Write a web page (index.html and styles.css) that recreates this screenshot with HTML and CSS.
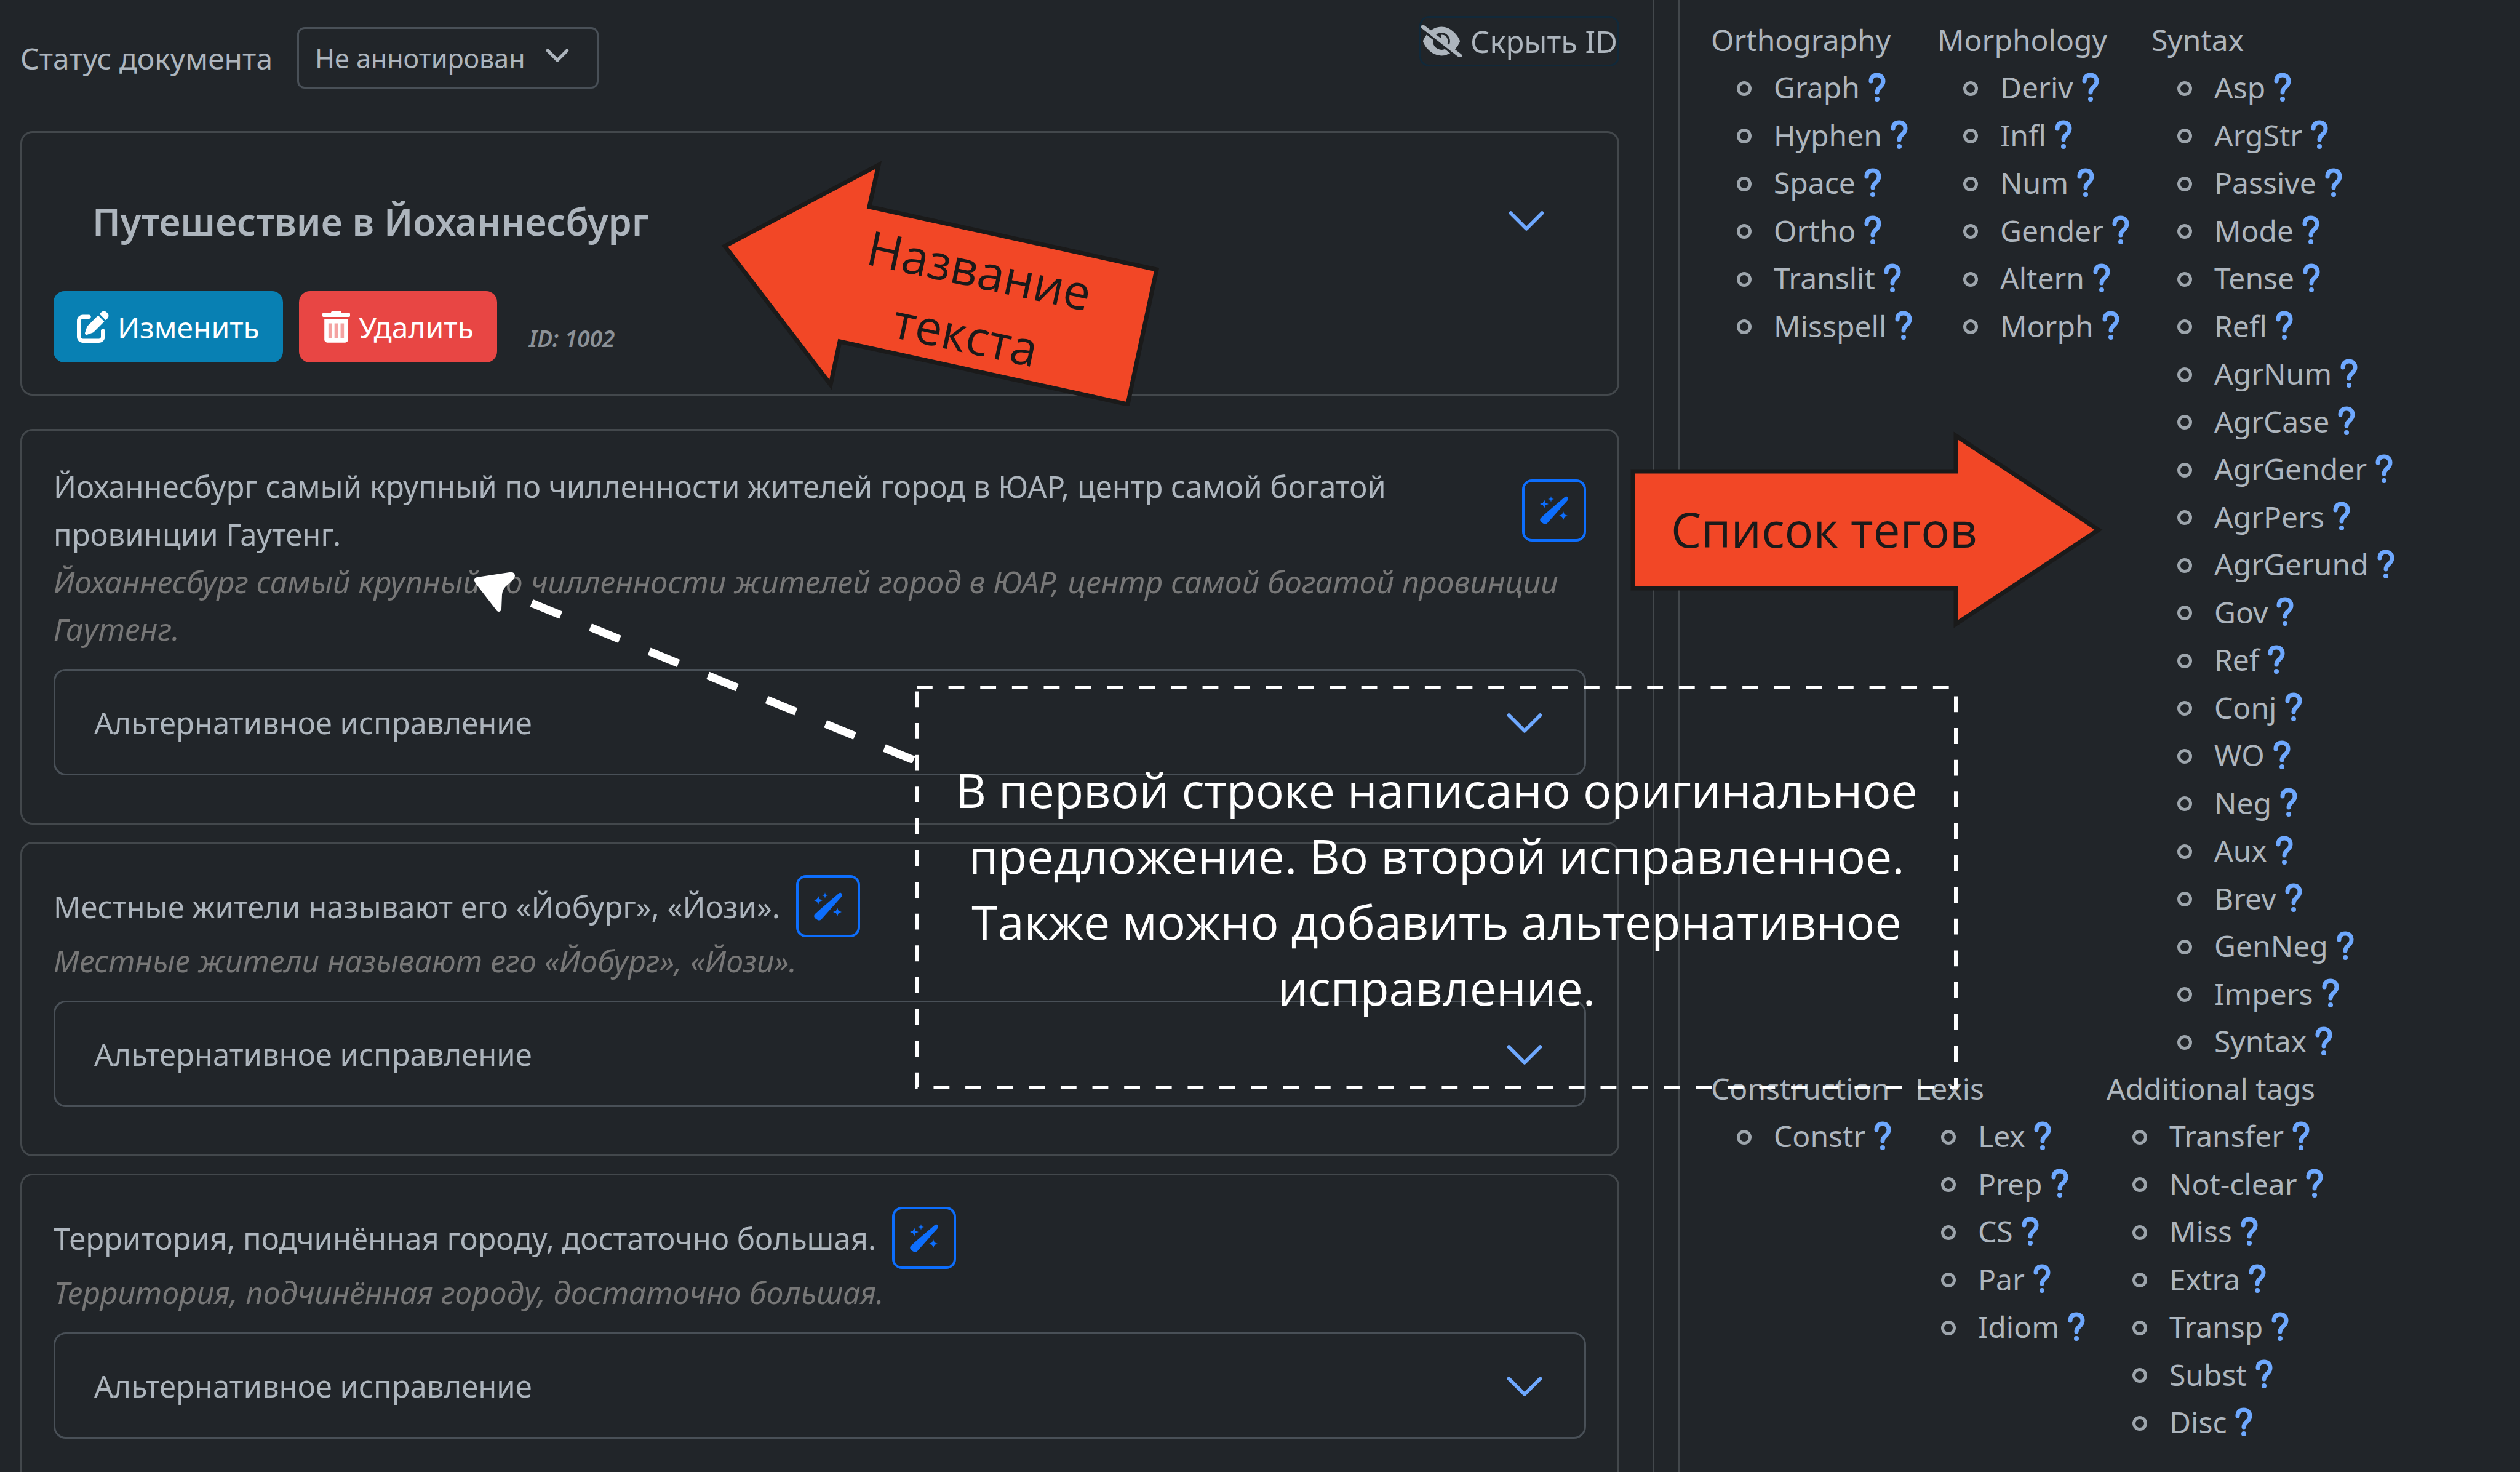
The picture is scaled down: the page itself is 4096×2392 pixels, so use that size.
FILE: index.html
```html
<!DOCTYPE html>
<html lang="ru">
<head>
<meta charset="utf-8">
<title>Аннотирование документа</title>
<link rel="stylesheet" href="styles.css">
</head>
<body>
<svg class="sprite" aria-hidden="true">
  <symbol id="chevron" viewBox="0 0 16 16"><path d="M2 5l6 6 6-6" fill="none" stroke="currentColor" stroke-linecap="round" stroke-linejoin="round"/></symbol>
  <symbol id="edit" viewBox="0 0 512 512"><path fill="currentColor" d="M471.600 21.700c-21.900-21.900-57.300-21.900-79.200 0L362.300 51.700l97.900 97.900 30.100-30.100c21.900-21.900 21.900-57.300 0-79.200L471.600 21.700zm-299.200 220c-6.100 6.100-10.800 13.600-13.500 21.900l-29.600 88.800c-2.900 8.600-.6 18.100 5.800 24.600s15.900 8.700 24.600 5.800l88.800-29.600c8.200-2.700 15.700-7.400 21.900-13.500L437.700 172.300 339.700 74.300 172.400 241.700zM96 64C43 64 0 107 0 160V416c0 53 43 96 96 96H352c53 0 96-43 96-96V320c0-17.700-14.300-32-32-32s-32 14.300-32 32v96c0 17.700-14.300 32-32 32H96c-17.700 0-32-14.300-32-32V160c0-17.700 14.300-32 32-32h96c17.700 0 32-14.300 32-32s-14.300-32-32-32H96z"/></symbol>
  <symbol id="trash" viewBox="0 0 448 512"><path fill="currentColor" d="M432 32H312l-9.400-18.700A24 24 0 0 0 281.100 0H166.800a23.700 23.700 0 0 0-21.400 13.300L136 32H16A16 16 0 0 0 0 48v32a16 16 0 0 0 16 16h416a16 16 0 0 0 16-16V48a16 16 0 0 0-16-16zM32 128v336a48 48 0 0 0 48 48h288a48 48 0 0 0 48-48V128z"/><path fill="#f4a3a2" d="M98 200h56v240H98zM196 200h56v240h-56zM294 200h56v240h-56z"/></symbol>
  <symbol id="eye-slash" viewBox="0 0 640 512"><path fill="currentColor" stroke="currentColor" stroke-width="14" d="M38.800 5.100C28.400-3.100 13.300-1.200 5.100 9.200S-1.200 34.700 9.200 42.900l592 464c10.400 8.200 25.500 6.300 33.700-4.100s6.300-25.500-4.100-33.700L525.600 386.700c39.600-40.600 66.400-86.100 79.900-118.400 3.300-7.900 3.300-16.700 0-24.600-14.900-35.700-46.200-87.700-93-131.100C465.500 68.800 400.800 32 320 32c-68.200 0-125 26.300-169.300 60.800L38.800 5.100zM223.100 149.500C248.600 126.200 282.700 112 320 112c79.500 0 144 64.500 144 144 0 24.900-6.300 48.300-17.400 68.700L408 294.500c8.400-19.300 10.600-41.400 4.800-63.300-11.100-41.500-47.800-69.400-88.600-71.100-5.800-.2-9.200 6.100-7.400 11.700 2.100 6.400 3.300 13.200 3.300 20.300 0 10.200-2.400 19.800-6.600 28.300l-90.300-70.800zM373 389.900c-16.400 6.500-34.300 10.100-53 10.100-79.500 0-144-64.500-144-144 0-6.900.5-13.600 1.400-20.200L83.100 161.500C60.300 191.200 44 220.800 34.500 243.700c-3.300 7.900-3.300 16.700 0 24.600 14.900 35.700 46.200 87.700 93 131.100C174.500 443.200 239.200 480 320 480c47.800 0 89.900-12.900 126.200-32.500L373 389.900z"/></symbol>
  <symbol id="wand" viewBox="0 0 46 46"><path fill="currentColor" d="M40 2q3-3 5 0t0 5L13 43q-3 4-7 2t-5-4q-2-3 1-6l10-9zM7 6l2 5 5 2-5 2-2 5-2-5-5-2 5-2zM18 0l1 4 4 1-4 1-1 4-1-4-4-1 4-1zM38 25l2 5 5 2-5 2-2 5-2-5-5-2 5-2z"/></symbol>
  <symbol id="help" viewBox="0 0 28 48"><path d="M4 14C4 7 8 4 14 4s10 4 10 10c0 10-10 9-10 18" fill="none" stroke="currentColor" stroke-width="7" stroke-linecap="round"/><circle cx="14" cy="43" r="4" fill="currentColor"/></symbol>
</svg>

<div class="app">
  <main class="document">
    <header class="toolbar">
      <div class="status">
        <label for="status">Статус документа</label>
        <span class="select">
          <select id="status"><option>Не аннотирован</option></select>
          <svg class="select-arrow"><use href="#chevron"/></svg>
        </span>
      </div>
      <button class="toggle-id" type="button"><svg class="icon-eye"><use href="#eye-slash"/></svg>Скрыть ID</button>
    </header>

    <section class="card title-card">
      <button class="title-toggle" type="button"><span>Путешествие в Йоханнесбург</span><svg class="chevron"><use href="#chevron"/></svg></button>
      <div class="actions">
        <button class="btn btn-edit" type="button"><svg class="icon-edit"><use href="#edit"/></svg>Изменить</button>
        <button class="btn btn-delete" type="button"><svg class="icon-trash"><use href="#trash"/></svg>Удалить</button>
        <span class="doc-id">ID: 1002</span>
      </div>
    </section>

    <section class="card">
      <div class="sentence">
        <p class="original">Йоханнесбург самый крупный по чилленности жителей город в ЮАР, центр самой богатой провинции Гаутенг.</p>
        <button class="wand" type="button" aria-label="Исправить"><svg><use href="#wand"/></svg></button>
      </div>
      <p class="corrected">Йоханнесбург самый крупный по чилленности жителей город в ЮАР, центр самой богатой провинции Гаутенг.</p>
      <button class="alternative" type="button"><span>Альтернативное исправление</span><svg class="chevron"><use href="#chevron"/></svg></button>
    </section>

    <section class="card">
      <div class="sentence">
        <p class="original">Местные жители называют его «Йобург», «Йози».</p>
        <button class="wand" type="button" aria-label="Исправить"><svg><use href="#wand"/></svg></button>
      </div>
      <p class="corrected">Местные жители называют его «Йобург», «Йози».</p>
      <button class="alternative" type="button"><span>Альтернативное исправление</span><svg class="chevron"><use href="#chevron"/></svg></button>
    </section>

    <section class="card">
      <div class="sentence">
        <p class="original">Территория, подчинённая городу, достаточно большая.</p>
        <button class="wand" type="button" aria-label="Исправить"><svg><use href="#wand"/></svg></button>
      </div>
      <p class="corrected">Территория, подчинённая городу, достаточно большая.</p>
      <button class="alternative" type="button"><span>Альтернативное исправление</span><svg class="chevron"><use href="#chevron"/></svg></button>
    </section>
  </main>

  <aside class="tags">
    <div class="tag-row tag-row-main">
      <section>
        <h2>Orthography</h2>
        <ul>
          <li>Graph<a href="#graph" aria-label="Graph"><svg><use href="#help"/></svg></a></li>
          <li>Hyphen<a href="#hyphen" aria-label="Hyphen"><svg><use href="#help"/></svg></a></li>
          <li>Space<a href="#space" aria-label="Space"><svg><use href="#help"/></svg></a></li>
          <li>Ortho<a href="#ortho" aria-label="Ortho"><svg><use href="#help"/></svg></a></li>
          <li>Translit<a href="#translit" aria-label="Translit"><svg><use href="#help"/></svg></a></li>
          <li>Misspell<a href="#misspell" aria-label="Misspell"><svg><use href="#help"/></svg></a></li>
        </ul>
      </section>
      <section>
        <h2>Morphology</h2>
        <ul>
          <li>Deriv<a href="#deriv" aria-label="Deriv"><svg><use href="#help"/></svg></a></li>
          <li>Infl<a href="#infl" aria-label="Infl"><svg><use href="#help"/></svg></a></li>
          <li>Num<a href="#num" aria-label="Num"><svg><use href="#help"/></svg></a></li>
          <li>Gender<a href="#gender" aria-label="Gender"><svg><use href="#help"/></svg></a></li>
          <li>Altern<a href="#altern" aria-label="Altern"><svg><use href="#help"/></svg></a></li>
          <li>Morph<a href="#morph" aria-label="Morph"><svg><use href="#help"/></svg></a></li>
        </ul>
      </section>
      <section>
        <h2>Syntax</h2>
        <ul>
          <li>Asp<a href="#asp" aria-label="Asp"><svg><use href="#help"/></svg></a></li>
          <li>ArgStr<a href="#argstr" aria-label="ArgStr"><svg><use href="#help"/></svg></a></li>
          <li>Passive<a href="#passive" aria-label="Passive"><svg><use href="#help"/></svg></a></li>
          <li>Mode<a href="#mode" aria-label="Mode"><svg><use href="#help"/></svg></a></li>
          <li>Tense<a href="#tense" aria-label="Tense"><svg><use href="#help"/></svg></a></li>
          <li>Refl<a href="#refl" aria-label="Refl"><svg><use href="#help"/></svg></a></li>
          <li>AgrNum<a href="#agrnum" aria-label="AgrNum"><svg><use href="#help"/></svg></a></li>
          <li>AgrCase<a href="#agrcase" aria-label="AgrCase"><svg><use href="#help"/></svg></a></li>
          <li>AgrGender<a href="#agrgender" aria-label="AgrGender"><svg><use href="#help"/></svg></a></li>
          <li>AgrPers<a href="#agrpers" aria-label="AgrPers"><svg><use href="#help"/></svg></a></li>
          <li>AgrGerund<a href="#agrgerund" aria-label="AgrGerund"><svg><use href="#help"/></svg></a></li>
          <li>Gov<a href="#gov" aria-label="Gov"><svg><use href="#help"/></svg></a></li>
          <li>Ref<a href="#ref" aria-label="Ref"><svg><use href="#help"/></svg></a></li>
          <li>Conj<a href="#conj" aria-label="Conj"><svg><use href="#help"/></svg></a></li>
          <li>WO<a href="#wo" aria-label="WO"><svg><use href="#help"/></svg></a></li>
          <li>Neg<a href="#neg" aria-label="Neg"><svg><use href="#help"/></svg></a></li>
          <li>Aux<a href="#aux" aria-label="Aux"><svg><use href="#help"/></svg></a></li>
          <li>Brev<a href="#brev" aria-label="Brev"><svg><use href="#help"/></svg></a></li>
          <li>GenNeg<a href="#genneg" aria-label="GenNeg"><svg><use href="#help"/></svg></a></li>
          <li>Impers<a href="#impers" aria-label="Impers"><svg><use href="#help"/></svg></a></li>
          <li>Syntax<a href="#syntax" aria-label="Syntax"><svg><use href="#help"/></svg></a></li>
        </ul>
      </section>
    </div>
    <div class="tag-row tag-row-extra">
      <section>
        <h2>Construction</h2>
        <ul>
          <li>Constr<a href="#constr" aria-label="Constr"><svg><use href="#help"/></svg></a></li>
        </ul>
      </section>
      <section>
        <h2>Lexis</h2>
        <ul>
          <li>Lex<a href="#lex" aria-label="Lex"><svg><use href="#help"/></svg></a></li>
          <li>Prep<a href="#prep" aria-label="Prep"><svg><use href="#help"/></svg></a></li>
          <li>CS<a href="#cs" aria-label="CS"><svg><use href="#help"/></svg></a></li>
          <li>Par<a href="#par" aria-label="Par"><svg><use href="#help"/></svg></a></li>
          <li>Idiom<a href="#idiom" aria-label="Idiom"><svg><use href="#help"/></svg></a></li>
        </ul>
      </section>
      <section>
        <h2>Additional tags</h2>
        <ul>
          <li>Transfer<a href="#transfer" aria-label="Transfer"><svg><use href="#help"/></svg></a></li>
          <li>Not-clear<a href="#not-clear" aria-label="Not-clear"><svg><use href="#help"/></svg></a></li>
          <li>Miss<a href="#miss" aria-label="Miss"><svg><use href="#help"/></svg></a></li>
          <li>Extra<a href="#extra" aria-label="Extra"><svg><use href="#help"/></svg></a></li>
          <li>Transp<a href="#transp" aria-label="Transp"><svg><use href="#help"/></svg></a></li>
          <li>Subst<a href="#subst" aria-label="Subst"><svg><use href="#help"/></svg></a></li>
          <li>Disc<a href="#disc" aria-label="Disc"><svg><use href="#help"/></svg></a></li>
        </ul>
      </section>
    </div>
  </aside>

  <div class="note note-title">
    <svg viewBox="0 0 720 420" aria-hidden="true"><path class="arrow-shape" d="M8 160L258 28 243 96 710 198 663 417 195 315 180 385z"/></svg>
    <span>Название текста</span>
  </div>

  <div class="note note-tags">
    <svg viewBox="0 0 780 330" aria-hidden="true"><path class="arrow-shape" d="M14 71H539V13L771 166 539 319V261H14z"/></svg>
    <span>Список тегов</span>
  </div>

  <svg class="note pointer" viewBox="0 0 730 320" aria-hidden="true">
    <path d="M104 60L725 315" stroke="#fff" stroke-width="13" stroke-dasharray="51.500 51.800"/>
    <path fill="#fff" d="M15 18L68 10Q76 9 77 15 77 19 73 23L62 33Q57 38 56 46L55 70Q53 76 48 73L13 28Q8 20 15 18z"/>
  </svg>

  <div class="note note-lines">
    <svg viewBox="0 0 1696 656" aria-hidden="true"><path d="M3 3H1692V653H3z" fill="none" stroke="#fff" stroke-width="6" stroke-dasharray="25.800 25.820"/></svg>
    <p>В первой строке написано оригинальное предложение. Во второй исправленное. Также можно добавить альтернативное исправление.</p>
  </div>
</div>
</body>
</html>
```
FILE: styles.css
```css
* { box-sizing: border-box; margin: 0; padding: 0; }

body {
  background: #212529;
  color: #adb5bd;
  font: 49px/77px "Noto Sans", "Open Sans", sans-serif;
}

button, select { font: inherit; color: inherit; background: none; border: 0; }
svg { display: block; }
.sprite { position: absolute; width: 0; height: 0; }

.app {
  position: relative;
  display: flex;
  gap: 39px;
  height: 100vh;
  overflow: hidden;
}

.document {
  flex: 1;
  padding: 26px 54px 0 33px;
  border-right: 3px solid #43484c;
}

.toolbar {
  display: flex;
  justify-content: space-between;
  align-items: flex-start;
  height: 187px;
}

.status { display: flex; align-items: center; gap: 40px; padding-top: 18px; font-size: 48px; }
.select { display: grid; align-items: center; font-size: 43px; }
.select select {
  grid-area: 1 / 1;
  appearance: none;
  width: 490px;
  height: 100px;
  padding: 0 26px;
  border: 3px solid #495057;
  border-radius: 12px;
}
.select-arrow { grid-area: 1 / 1; justify-self: end; width: 42px; height: 42px; margin: 0 46px 8px 0; stroke-width: 2; pointer-events: none; }

.toggle-id {
  display: flex;
  align-items: center;
  gap: 14px;
  height: 82px;
  border: 3px solid #11293a;
  border-radius: 16px;
}
.icon-eye { width: 66px; height: 52px; }

.card {
  margin-bottom: 28px;
  padding: 51px 51px 77px;
  border: 3px solid #43484c;
  border-radius: 20px;
}

.title-card { height: 430px; margin-bottom: 54px; }
.title-toggle {
  display: flex;
  align-items: center;
  justify-content: space-between;
  width: 100%;
  height: 180px;
  padding: 4px 63px 0;
  font-size: 61px;
  font-weight: 600;
}
.chevron { width: 68px; height: 68px; color: #6ea8fe; stroke-width: 1.4; }

.actions { display: flex; align-items: center; gap: 26px; padding-top: 26px; }
.btn {
  display: flex;
  align-items: center;
  gap: 14px;
  height: 116px;
  padding: 0 38px;
  border-radius: 18px;
  color: #fff;
  font-size: 48px;
}
.btn-edit { background: #0880b3; }
.btn-delete { background: #e84644; }
.icon-edit { width: 52px; height: 52px; }
.icon-trash { width: 45px; height: 52px; }
.doc-id { padding: 36px 0 0 26px; font-size: 37px; font-style: italic; font-weight: 600; color: #8b9197; }

.sentence { display: flex; align-items: center; gap: 26px; }
.original { line-height: 78px; }
.wand {
  display: grid;
  place-items: center;
  flex: none;
  width: 104px;
  height: 101px;
  border: 4px solid #0d6efd;
  border-radius: 16px;
  color: #0d6efd;
}
.wand svg { width: 46px; height: 46px; }
.corrected { font-size: 50px; font-style: italic; color: #777; }
.alternative {
  display: flex;
  align-items: center;
  justify-content: space-between;
  width: 100%;
  height: 173px;
  margin-top: 26px;
  padding: 2px 63px 0;
  border: 3px solid #495057;
  border-radius: 20px;
}

.tags {
  width: 1368px;
  padding: 26px 0 0 50px;
  border-left: 3px solid #43484c;
  font-size: 48px;
}
.tag-row { display: grid; }
.tag-row-main { grid-template-columns: 368px 348px 1fr; }
.tag-row-extra { grid-template-columns: 332px 311px 1fr; }
.tags h2 { font-size: 48px; font-weight: 400; }
.tags ul { list-style: none; }
.tags li { display: flex; align-items: center; gap: 14px; height: 77px; padding-left: 42px; }
.tags li:nth-child(even) { height: 78px; }
.tags li::before {
  content: "";
  box-sizing: border-box;
  width: 24px;
  height: 24px;
  margin: 4px 22px 0 0;
  border: 5px solid #9da5ac;
  border-radius: 50%;
}
.tags a { color: #6ea8fe; }
.tags a svg { width: 28px; height: 48px; }

.note { position: absolute; font: 78px/107px "Open Sans", "Noto Sans", sans-serif; text-align: center; }
.note svg { position: absolute; inset: 0; width: 100%; height: 100%; }
.arrow-shape { fill: #f24726; stroke: #1a1a1a; stroke-width: 7; stroke-miterlimit: 10; }
.note-title { left: 1170px; top: 240px; width: 720px; height: 420px; color: #1a1a1a; }
.note-title span { position: absolute; left: 211px; top: 144px; width: 400px; transform: rotate(12deg); }
.note-tags { left: 2640px; top: 695px; width: 780px; height: 330px; color: #1a1a1a; }
.note-tags span { position: absolute; left: 13px; top: 112px; width: 624px; }
.pointer { left: 760px; top: 920px; width: 730px; height: 320px; }
.note-lines {
  left: 1487px;
  top: 1114px;
  width: 1696px;
  height: 656px;
  display: flex;
  align-items: center;
  padding: 4px 40px 0;
  color: #fff;
  font-size: 77px;
}
```
